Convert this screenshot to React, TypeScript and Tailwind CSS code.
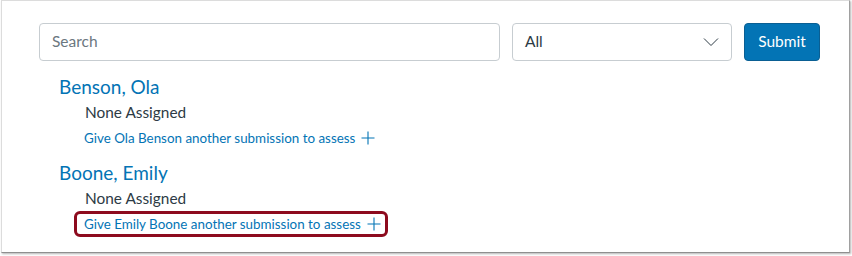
import React from "react";

function Plus() {
  return (
    <svg width="14" height="14" viewBox="0 0 14 14" className="ml-[6px] shrink-0">
      <path d="M7 0.5V13.5M0.5 7H13.5" stroke="#0374B5" strokeWidth="1.1" fill="none" />
    </svg>
  );
}

function Student({ name, first, highlight }: { name: string; first: string; highlight?: boolean }) {
  return (
    <div className="flex flex-col items-start pl-[20px]">
      <div className="text-[19px] leading-[26px] text-[#0374B5]">{name}</div>
      <div className="ml-[26px] mt-[1px] text-[15.4px] leading-[23px] text-[#2D3B45]">None Assigned</div>
      <div
        className={
          "ml-[15px] mt-[1px] flex items-center rounded-[6px] border-[3px] pl-[7px] pr-[4px] " +
          (highlight ? "border-[#8d0b1e]" : "border-transparent")
        }
      >
        <span className="text-[13.4px] leading-[20px] text-[#0374B5]">
          Give {first} another submission to assess
        </span>
        <Plus />
      </div>
    </div>
  );
}

export default function App() {
  return (
    <div className="h-[256px] w-[852px] bg-white" style={{ fontFamily: "Lato, 'Noto Sans', sans-serif" }}>
      <div className="ml-[1px] h-[253px] w-[849px] border border-[#dcdcdc] border-b-[#8f8f8f] border-r-[#a0a0a0] bg-white pl-[37px] pt-[22px] shadow-[1px_1px_2px_rgba(0,0,0,0.3)]">
        <div className="flex items-center gap-[12px]">
          <div className="flex h-[38px] w-[461px] items-center rounded-[4px] border border-[#c7cdd1] bg-white px-[12px] text-[15.5px] text-[#6b7780]">
            Search
          </div>
          <div className="flex h-[38px] w-[220px] items-center justify-between rounded-[4px] border border-[#c7cdd1] bg-white pl-[12px] pr-[12px] text-[15.5px] text-[#2D3B45]">
            <span>All</span>
            <svg width="16" height="10" viewBox="0 0 16 10">
              <path d="M1 1.5L8 8.5L15 1.5" stroke="#2D3B45" strokeWidth="1" fill="none" />
            </svg>
          </div>
          <div className="flex h-[38px] w-[76px] items-center justify-center rounded-[4px] border border-[#0a5f93] bg-[#0374B5] text-[15.5px] text-white">
            Submit
          </div>
        </div>
        <div className="mt-[13px] flex flex-col gap-[9px]">
          <Student name="Benson, Ola" first="Ola Benson" />
          <Student name="Boone, Emily" first="Emily Boone" highlight />
        </div>
      </div>
    </div>
  );
}
